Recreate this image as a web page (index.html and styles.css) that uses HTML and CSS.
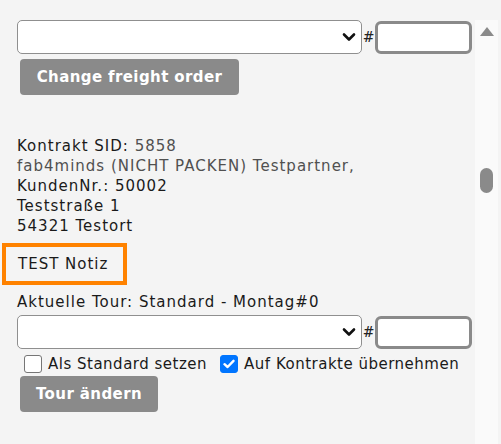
FILE: index.html
```html
<!DOCTYPE html>
<html lang="de">
<head>
<meta charset="utf-8">
<title>Kontrakt</title>
<link rel="stylesheet" href="styles.css">
</head>
<body>
<div class="page">
  <div class="content">
    <div class="pick-row">
      <div class="select-wrap">
        <select class="sel"><option></option></select>
        <svg class="chev" width="14" height="10" viewBox="0 0 14 10"><path d="M2 2.5 L7 7.5 L12 2.5" fill="none" stroke="#111" stroke-width="2.6" stroke-linecap="round" stroke-linejoin="round"/></svg>
      </div>
      <span class="hash">#</span>
      <input class="num" type="text">
    </div>
    <button class="btn btn-freight">Change freight order</button>

    <div class="info">
      <div>Kontrakt SID: <span class="muted">5858</span></div>
      <div class="muted">fab4minds (NICHT PACKEN) Testpartner,</div>
      <div>KundenNr.: 50002</div>
      <div>Teststraße 1</div>
      <div>54321 Testort</div>
    </div>

    <div class="note">TEST Notiz</div>

    <div class="tour-label">Aktuelle Tour: Standard - Montag#0</div>
    <div class="pick-row">
      <div class="select-wrap">
        <select class="sel"><option></option></select>
        <svg class="chev" width="14" height="10" viewBox="0 0 14 10"><path d="M2 2.5 L7 7.5 L12 2.5" fill="none" stroke="#111" stroke-width="2.6" stroke-linecap="round" stroke-linejoin="round"/></svg>
      </div>
      <span class="hash">#</span>
      <input class="num" type="text">
    </div>
    <div class="checks">
      <label class="chk"><span class="box"></span>Als Standard setzen</label>
      <label class="chk"><span class="box on"><svg width="12" height="10" viewBox="0 0 12 10"><path d="M1.5 5.2 L4.6 8 L10.5 1.8" fill="none" stroke="#fff" stroke-width="2.4" stroke-linecap="round" stroke-linejoin="round"/></svg></span>Auf Kontrakte übernehmen</label>
    </div>
    <button class="btn btn-tour">Tour ändern</button>
  </div>
  <div class="scrollbar">
    <div class="arrow"></div>
    <div class="thumb"></div>
  </div>
</div>
</body>
</html>
```

FILE: styles.css
```css
html, body {
  margin: 0;
  padding: 0;
  background: #f4f4f4;
}
body {
  font-family: "DejaVu Sans", Verdana, sans-serif;
  font-size: 15px;
  letter-spacing: 1px;
  color: #1a1a1a;
  height: 444px;
  overflow: hidden;
}
.page {
  display: flex;
  width: 501px;
  height: 444px;
}
.content {
  width: 458px;
  flex-shrink: 0;
  padding: 20px 0 0 17px;
  display: flex;
  flex-direction: column;
  align-items: flex-start;
}
.pick-row {
  display: flex;
  align-items: center;
  height: 34px;
}
.select-wrap {
  position: relative;
  width: 345px;
  height: 34px;
}
.sel {
  appearance: none;
  -webkit-appearance: none;
  width: 100%;
  height: 100%;
  margin: 0;
  box-sizing: border-box;
  background: #fff;
  border: 1px solid #8f8f8f;
  border-radius: 5px;
  font: inherit;
}
.chev {
  position: absolute;
  right: 6px;
  top: 12px;
}
.hash {
  font-family: "DejaVu Serif", serif;
  font-size: 14px;
  letter-spacing: 0;
  width: 13px;
  text-align: center;
  color: #222;
}
.num {
  width: 97px;
  height: 33px;
  box-sizing: border-box;
  margin: 0;
  border: 3px solid #8a8a8a;
  border-radius: 6px;
  background: #fff;
  font: inherit;
}
.btn {
  background: #8a8a8a;
  color: #fff;
  border: none;
  border-radius: 4px;
  font-family: "DejaVu Sans", Verdana, sans-serif;
  font-weight: bold;
  font-size: 15px;
  letter-spacing: 0.4px;
  height: 36px;
  margin: 5px 0 0 3px;
  padding: 0;
  white-space: nowrap;
}
.btn-freight {
  width: 219px;
}
.btn-tour {
  width: 138px;
  margin-top: 2px;
}
.info {
  margin-top: 41px;
  line-height: 20px;
}
.muted {
  color: #505050;
}
.note {
  margin: 7px 0 0 -15px;
  width: 125px;
  height: 42px;
  box-sizing: border-box;
  border: 4px solid #ff8200;
  padding-left: 12px;
  line-height: 34px;
}
.tour-label {
  margin-top: 7px;
  line-height: 20px;
}
.tour-label + .pick-row {
  margin-top: 3px;
}
.checks {
  display: flex;
  align-items: center;
  height: 20px;
  margin-top: 5px;
  padding-left: 7px;
  gap: 13px;
  white-space: nowrap;
  letter-spacing: 0.5px;
}
.chk {
  display: flex;
  align-items: center;
  flex-shrink: 0;
  gap: 6px;
  line-height: 20px;
}
.box {
  width: 16px;
  height: 16px;
  flex-shrink: 0;
  border: 1px solid #767676;
  border-radius: 3px;
  background: #fff;
  display: flex;
  align-items: center;
  justify-content: center;
}
.box.on {
  background: #0075ff;
  border-color: #0075ff;
}
.scrollbar {
  margin-top: 20px;
  width: 23px;
  height: 424px;
  background: #fafafa;
  display: flex;
  flex-direction: column;
  align-items: center;
}
.arrow {
  margin-top: 7px;
  width: 0;
  height: 0;
  border-left: 7px solid transparent;
  border-right: 7px solid transparent;
  border-bottom: 9px solid #8a8a8a;
}
.thumb {
  margin-top: 132px;
  width: 13px;
  height: 25px;
  border-radius: 7px;
  background: #8a8a8a;
}
```
